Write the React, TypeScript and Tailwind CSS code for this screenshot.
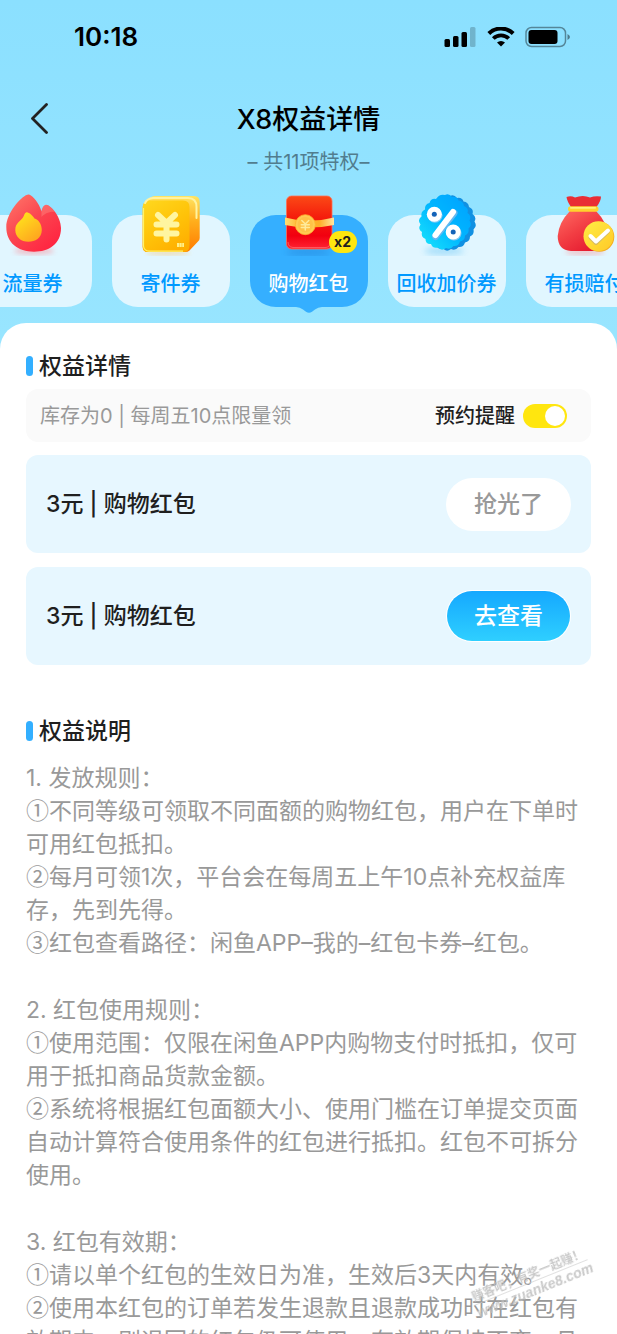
import React, { useState } from 'react'

type Perk = {
  label: string
  icon: React.FC
  count?: number
}

type Rule = {
  title: string
  items: string[]
}

const FlameIcon: React.FC = () => (
  <svg viewBox="0 0 60 64" className="h-16 w-[60px]" aria-hidden="true">
    <defs>
      <linearGradient id="flame" x1="0" y1="0" x2="0.8" y2="1">
        <stop offset="0" stopColor="#ff7a6b" />
        <stop offset="0.5" stopColor="#fb4650" />
        <stop offset="1" stopColor="#ff2340" />
      </linearGradient>
      <linearGradient id="flameCore" x1="0" y1="0" x2="0.7" y2="1">
        <stop offset="0" stopColor="#ffec1c" />
        <stop offset="1" stopColor="#ffa51f" />
      </linearGradient>
      <filter id="flameBlur" x="-20%" y="-100%" width="140%" height="300%">
        <feGaussianBlur stdDeviation="2.5" />
      </filter>
    </defs>
    <ellipse cx="31" cy="59" rx="20" ry="3.5" fill="#ff7a85" opacity="0.45" filter="url(#flameBlur)" />
    <path
      d="M26 2.6C30 4 36 11 38.500 19.500C39 17 40 13.500 43 12.800C48 13 58 25 58 36C58 52 46 59.700 31 59.700C15 59.700 3.300 51 3.300 35C3.300 21 18 5 23.500 3Q25 2.300 26 2.600Z"
      fill="url(#flame)"
    />
    <path d="M38.500 19.500C39 17 40 13.500 43 12.800C45.500 13 49 16 52 20C47 19 41 22 38.500 25Z" fill="#ff8a80" opacity="0.45" />
    <path
      d="M23.500 20.300C26 20 30 24 31.500 26.500C35 27 38.800 32 38.800 38C38.800 46 32 49.800 25.500 49.800C18 49.800 12.300 45 12.300 38C12.300 31 17.500 29 20 25.500C21.500 23 21.500 20.800 23.500 20.300Z"
      fill="url(#flameCore)"
    />
  </svg>
)

const CouponBoxIcon: React.FC = () => (
  <svg viewBox="0 0 60 64" className="h-16 w-[60px]" aria-hidden="true">
    <defs>
      <linearGradient id="boxFront" x1="0.2" y1="0" x2="0.8" y2="1">
        <stop offset="0" stopColor="#ffd51c" />
        <stop offset="0.5" stopColor="#ffc309" />
        <stop offset="1" stopColor="#ffad00" />
      </linearGradient>
      <linearGradient id="boxSide" x1="0" y1="0" x2="0" y2="1">
        <stop offset="0" stopColor="#ffe564" />
        <stop offset="0.45" stopColor="#ffae1c" />
        <stop offset="1" stopColor="#ff7b00" />
      </linearGradient>
      <filter id="boxBlur" x="-20%" y="-100%" width="140%" height="300%">
        <feGaussianBlur stdDeviation="2" />
      </filter>
    </defs>
    <ellipse cx="27" cy="61" rx="22" ry="2.500" fill="#ffba55" opacity="0.4" filter="url(#boxBlur)" />
    <path
      d="M14 4H53Q58.700 4 58.700 10V46Q58.700 48 57 49.500L48.500 58.500Q47 60 44 60H7Q1.700 60 1.700 55V15Q1.700 12 4 10L9 6Q11 4 14 4Z"
      fill="url(#boxSide)"
    />
    <path d="M8 8.500H42Q48.500 8.500 48.500 15V53Q48.500 60 43 60H7Q1.700 60 1.700 55V15Q2 8.500 8 8.500Z" fill="url(#boxFront)" />
    <path d="M4 11Q6 6.500 12 6H47Q55.500 6 55.500 15V26" fill="none" stroke="#fff3a0" strokeWidth="2" strokeLinecap="round" />
    <path d="M2.500 16V54Q3 58.800 8 59.200H42" fill="none" stroke="#fff36a" strokeWidth="1.200" />
    <path
      d="M17 23L25.500 31L34 23M15.500 32.500H35.500M15.500 41.500H35.500M25.500 31V47.500"
      fill="none"
      stroke="#fff5a0"
      strokeWidth="6"
      strokeLinecap="round"
      strokeLinejoin="round"
    />
    <path d="M36 53H38.300M38.700 53H40.700M41.200 53H43" stroke="#fff08a" strokeWidth="4" />
  </svg>
)

const RedPacketIcon: React.FC = () => (
  <svg viewBox="0 0 60 64" className="h-16 w-[60px]" aria-hidden="true">
    <defs>
      <linearGradient id="packet" x1="0" y1="0" x2="0" y2="1">
        <stop offset="0" stopColor="#fb4a16" />
        <stop offset="0.4" stopColor="#f51d0c" />
        <stop offset="0.75" stopColor="#f20010" />
        <stop offset="1" stopColor="#ff2334" />
      </linearGradient>
      <linearGradient id="packetBand" x1="0" y1="0" x2="1" y2="0">
        <stop offset="0" stopColor="#ffdd75" />
        <stop offset="0.3" stopColor="#ffb52b" />
        <stop offset="0.7" stopColor="#ffac27" />
        <stop offset="1" stopColor="#ffe6a0" />
      </linearGradient>
      <filter id="packetBlur" x="-20%" y="-100%" width="140%" height="300%">
        <feGaussianBlur stdDeviation="3" />
      </filter>
    </defs>
    <ellipse cx="29" cy="60" rx="22" ry="5" fill="#237ad0" opacity="0.35" filter="url(#packetBlur)" />
    <rect x="7.500" y="4" width="45.500" height="53" rx="5" fill="url(#packet)" stroke="#ff6f55" strokeWidth="0.800" />
    <path d="M9 50Q9 55 14 55.500H47Q51 55 51.500 50" fill="none" stroke="#ff5660" strokeWidth="1" />
    <path d="M6 25.500Q30 32 55 25.500V33Q30 38 6 33Z" fill="url(#packetBand)" />
    <circle cx="26.300" cy="32.700" r="10" fill="#ffcb53" stroke="#ffb42e" strokeWidth="0.800" />
    <circle cx="26.300" cy="32.700" r="7.600" fill="#ffc247" />
    <path
      d="M22.800 28.500L26.300 32L29.800 28.500M22.300 32.700H30.300M22.300 35.500H30.300M26.300 32V38"
      fill="none"
      stroke="#ffeb9a"
      strokeWidth="1.500"
      strokeLinecap="round"
    />
  </svg>
)

const SEAL =
  'M28 3Q32 1 35 5Q40 4 41.500 8.500Q46.500 9 47 14Q52 16 50.500 21Q55 24 52.500 28.500Q55.500 33 51.500 36.500Q52.500 41.500 48 43.500Q48 48.500 43 49.500Q41.500 54.500 36.500 54Q33.500 58 29 56Q24.500 59.500 21 55.500Q16 57 14 52Q8.500 52.500 8.500 47Q3.500 45 5 40Q0.500 37 3.500 32.500Q0 28 4.500 24.500Q3.500 19.500 8 17.500Q7.500 12 12.500 11Q14 6 19 7Q22.500 1.500 28 3Z'

const PercentIcon: React.FC = () => (
  <svg viewBox="0 0 60 64" className="h-16 w-[60px]" aria-hidden="true">
    <defs>
      <linearGradient id="seal" x1="1" y1="0" x2="0" y2="1">
        <stop offset="0" stopColor="#00a0ff" />
        <stop offset="0.5" stopColor="#00b6ff" />
        <stop offset="1" stopColor="#1be8fb" />
      </linearGradient>
      <filter id="sealBlur" x="-20%" y="-100%" width="140%" height="300%">
        <feGaussianBlur stdDeviation="3" />
      </filter>
    </defs>
    <ellipse cx="27" cy="59" rx="20" ry="4" fill="#4abaf3" opacity="0.4" filter="url(#sealBlur)" />
    <path d={SEAL} fill="#1190e2" transform="translate(5 1)" />
    <path d={SEAL} fill="url(#seal)" />
    <path d="M37 21L18.500 44.500" stroke="#62b8f1" strokeWidth="7" strokeLinecap="round" />
    <path d="M36 20L18.500 43" stroke="#fff" strokeWidth="6" strokeLinecap="round" />
    <circle cx="18" cy="23.300" r="7.500" fill="#83c8f2" />
    <circle cx="17.300" cy="22.300" r="7.500" fill="#fff" />
    <circle cx="17.300" cy="22.300" r="2.500" fill="#1463b8" />
    <circle cx="37" cy="41" r="7.500" fill="#83c8f2" />
    <circle cx="36.200" cy="40" r="7.500" fill="#fff" />
    <circle cx="36.200" cy="40" r="2.500" fill="#1463b8" />
  </svg>
)

const MoneyBagIcon: React.FC = () => (
  <svg viewBox="0 0 60 64" className="h-16 w-[60px]" aria-hidden="true">
    <defs>
      <linearGradient id="bag" x1="0" y1="0" x2="0.8" y2="1">
        <stop offset="0" stopColor="#ff6a62" />
        <stop offset="0.5" stopColor="#f23d43" />
        <stop offset="1" stopColor="#e3152d" />
      </linearGradient>
      <linearGradient id="bagCoin" x1="0" y1="0" x2="1" y2="1">
        <stop offset="0" stopColor="#ffed45" />
        <stop offset="1" stopColor="#ffc927" />
      </linearGradient>
      <filter id="bagBlur" x="-20%" y="-100%" width="140%" height="300%">
        <feGaussianBlur stdDeviation="2.500" />
      </filter>
    </defs>
    <ellipse cx="30" cy="60" rx="20" ry="3.500" fill="#ff8686" opacity="0.4" filter="url(#bagBlur)" />
    <path d="M11.500 5Q16 3.500 20 5.500Q28 2.500 35 5.500Q40 3.500 46 4.500Q46 9 41.500 15H16Q12 9 11.500 5Z" fill="#e92d35" />
    <path d="M15 19H41Q53 31 53 45Q52 59 39 59H16Q2.700 58 2.700 44Q4 30 15 19Z" fill="url(#bag)" />
    <rect x="13" y="14.300" width="30.500" height="5.500" rx="2.700" fill="#ffd32c" />
    <rect x="15" y="15" width="26" height="1.700" rx="0.800" fill="#fff07a" />
    <circle cx="44.300" cy="44.800" r="15" fill="#f4ac20" />
    <circle cx="43.500" cy="44.200" r="15" fill="url(#bagCoin)" />
    <path d="M35.500 45.500L41 51L53 39.500" fill="none" stroke="#d6bb61" strokeWidth="4" strokeLinecap="round" strokeLinejoin="round" />
    <path d="M35.500 44L41 49.500L53 38.500" fill="none" stroke="#fff" strokeWidth="4" strokeLinecap="round" strokeLinejoin="round" />
  </svg>
)

const perks: Perk[] = [
  { label: '流量券', icon: FlameIcon },
  { label: '寄件券', icon: CouponBoxIcon },
  { label: '购物红包', icon: RedPacketIcon, count: 2 },
  { label: '回收加价券', icon: PercentIcon },
  { label: '有损赔付', icon: MoneyBagIcon },
]

const coupons = [
  { id: 1, name: '3元 | 购物红包', soldOut: true },
  { id: 2, name: '3元 | 购物红包', soldOut: false },
]

const marks = ['①', '②', '③']

const rules: Rule[] = [
  {
    title: '1. 发放规则：',
    items: [
      '不同等级可领取不同面额的购物红包，用户在下单时可用红包抵扣。',
      '每月可领1次，平台会在每周五上午10点补充权益库存，先到先得。',
      '红包查看路径：闲鱼APP–我的–红包卡券–红包。',
    ],
  },
  {
    title: '2. 红包使用规则：',
    items: [
      '使用范围：仅限在闲鱼APP内购物支付时抵扣，仅可用于抵扣商品货款金额。',
      '系统将根据红包面额大小、使用门槛在订单提交页面自动计算符合使用条件的红包进行抵扣。红包不可拆分使用。',
    ],
  },
  {
    title: '3. 红包有效期：',
    items: [
      '请以单个红包的生效日为准，生效后3天内有效。',
      '使用本红包的订单若发生退款且退款成功时在红包有效期内，则退回的红包仍可使用，有效期保持不变，且',
    ],
  },
]

const StatusBar: React.FC = () => (
  <div className="flex h-[74px] items-center justify-between pr-[46px] pl-[74px]">
    <span className="text-[26px] leading-8 font-semibold text-black">10:18</span>
    <div className="flex items-center gap-[10px]">
      <svg viewBox="0 0 33 20" className="h-5 w-[33px]" aria-hidden="true">
        <rect x="0.500" y="12" width="5.500" height="8" rx="1.500" />
        <rect x="9" y="9" width="5.500" height="11" rx="1.500" />
        <rect x="17.500" y="5" width="5.500" height="15" rx="1.500" />
        <rect x="26" y="0" width="5.500" height="20" rx="1.500" opacity="0.200" />
      </svg>
      <svg viewBox="0 0 28 20" className="h-5 w-7" aria-hidden="true">
        <path d="M1.800 6.500A17.500 17.500 0 0 1 26.200 6.500" fill="none" stroke="#000" strokeWidth="4" />
        <path d="M6.300 11.500A11 11 0 0 1 21.700 11.500" fill="none" stroke="#000" strokeWidth="3.800" />
        <path d="M14 19.500L10 15.500A6 6 0 0 1 18 15.500Z" />
      </svg>
      <svg viewBox="0 0 46 22" className="h-[22px] w-[46px]" aria-hidden="true">
        <rect x="1" y="1.500" width="39.500" height="19" rx="5.500" fill="none" stroke="#000" strokeOpacity="0.400" strokeWidth="1.500" />
        <rect x="3.500" y="4" width="29" height="14" rx="3" />
        <path d="M42.500 8Q45 9.500 45 11Q45 12.500 42.500 14Z" opacity="0.450" />
      </svg>
    </div>
  </div>
)

const SectionTitle: React.FC<{ children: React.ReactNode }> = ({ children }) => (
  <h2 className="flex items-center gap-[6px] text-[23px] leading-8 font-medium text-[#1f1f1f]">
    <span className="h-5 w-[7px] rounded-full bg-[#33afff]" />
    {children}
  </h2>
)

const PerkTab: React.FC<{ perk: Perk; active: boolean; onSelect: () => void }> = ({
  perk,
  active,
  onSelect,
}) => {
  const Icon = perk.icon

  return (
    <button
      type="button"
      aria-pressed={active}
      onClick={onSelect}
      className={`relative flex w-[118px] shrink-0 flex-col items-center rounded-[26px] pb-[11px] ${
        active ? 'bg-[#35afff] text-white' : 'bg-[#e1f6ff] text-[#0099ff]'
      }`}
    >
      <span className="-mt-[23px]">
        <Icon />
      </span>
      <span className="mt-4 text-[20px] leading-6 font-medium whitespace-nowrap">{perk.label}</span>
      {perk.count && (
        <span className="absolute top-4 right-[11px] flex h-[22px] w-7 items-center justify-center rounded-full bg-[#ffe60f] text-[14px] leading-none font-bold text-[#1f1f1f]">
          x{perk.count}
        </span>
      )}
      {active && (
        <svg viewBox="0 0 26 6" className="absolute top-full h-[6px] w-[26px]" aria-hidden="true">
          <path d="M0 0Q4 0 7 2.500L10 4.800Q13 6.600 16 4.800L19 2.500Q22 0 26 0Z" fill="#35afff" />
        </svg>
      )}
    </button>
  )
}

export default function App() {
  const [selected, setSelected] = useState(2)
  const [remind, setRemind] = useState(true)

  return (
    <div className="relative flex h-screen flex-col overflow-hidden bg-linear-to-b from-[#8be0ff] to-[#98e5ff] to-25% font-[Inter,'Noto_Sans_CJK_SC',sans-serif]">
      <StatusBar />

      <header className="relative flex flex-col items-center pt-7">
        <button type="button" aria-label="返回" className="absolute top-6 left-6 p-1">
          <svg viewBox="0 0 24 32" className="h-8 w-6" aria-hidden="true">
            <path d="M18.500 2.500L4.500 16.500L18.500 30.500" fill="none" stroke="#222" strokeWidth="2.800" strokeLinecap="round" strokeLinejoin="round" />
          </svg>
        </button>
        <h1 className="text-[27px] leading-9 font-medium text-black">X8权益详情</h1>
        <p className="mt-2 text-[20px] leading-8 text-[#517d8e]">– 共11项特权–</p>
      </header>

      <nav className="flex shrink-0 justify-center gap-5 overflow-hidden pt-[37px] pb-4">
        {perks.map((perk, index) => (
          <PerkTab
            key={perk.label}
            perk={perk}
            active={index === selected}
            onSelect={() => setSelected(index)}
          />
        ))}
      </nav>

      <main className="min-h-0 flex-1 overflow-y-auto rounded-t-[26px] bg-white px-[26px] pt-[27px] [scrollbar-width:none]">
        <SectionTitle>权益详情</SectionTitle>

        <div className="mt-[7px] flex h-[53px] items-center justify-between rounded-xl bg-[#fafafa] pr-6 pl-[14px] text-[20px]">
          <p className="text-[#999]">库存为0 | 每周五10点限量领</p>
          <label className="flex items-center gap-2 font-medium text-[#1f1f1f]">
            预约提醒
            <input
              type="checkbox"
              role="switch"
              checked={remind}
              onChange={e => setRemind(e.target.checked)}
              className="h-6 w-11 appearance-none rounded-full bg-gray-300 p-[2px] before:block before:size-5 before:rounded-full before:bg-white checked:bg-[#ffe60f] checked:before:ml-5"
            />
          </label>
        </div>

        <ul className="mt-[13px] space-y-[14px]">
          {coupons.map(({ id, name, soldOut }) => (
            <li
              key={id}
              className="flex h-[98px] items-center justify-between rounded-xl bg-[#e7f7ff] px-5"
            >
              <span className="text-[23px] font-medium text-[#1f1f1f]">{name}</span>
              {soldOut ? (
                <button
                  type="button"
                  disabled
                  className="h-[53px] w-[125px] rounded-full bg-white text-[23px] font-medium text-[#999]"
                >
                  抢光了
                </button>
              ) : (
                <button
                  type="button"
                  className="h-[52px] w-[125px] rounded-full bg-white p-px text-[23px] font-medium text-white"
                >
                  <span className="flex size-full items-center justify-center rounded-full bg-linear-to-b from-[#16a8ff] to-[#2fcfff]">
                    去查看
                  </span>
                </button>
              )}
            </li>
          ))}
        </ul>

        <div className="mt-[50px]">
          <SectionTitle>权益说明</SectionTitle>
        </div>
        <div className="mt-[15px] space-y-[34px] text-[23px] leading-[33px] text-[#999]">
          {rules.map(rule => (
            <section key={rule.title}>
              <h3>{rule.title}</h3>
              {rule.items.map((item, index) => (
                <p key={item}>
                  <span className="font-['Noto_Sans_CJK_SC',sans-serif] leading-none">
                    {marks[index]}
                  </span>
                  {item}
                </p>
              ))}
            </section>
          ))}
        </div>
      </main>

      <div className="pointer-events-none absolute right-[25px] bottom-[35px] w-[122px] -rotate-[22deg] text-center font-bold whitespace-nowrap text-[#bbb]/80">
        <p className="font-['Noto_Sans_CJK_SC',sans-serif] text-[12px] leading-4">
          赚客吧，有奖一起赚！
        </p>
        <p className="border-t border-[#ccc]/60 font-['Liberation_Sans',sans-serif] text-[14px] leading-4 italic">
          www.zuanke8.com
        </p>
      </div>
    </div>
  )
}
